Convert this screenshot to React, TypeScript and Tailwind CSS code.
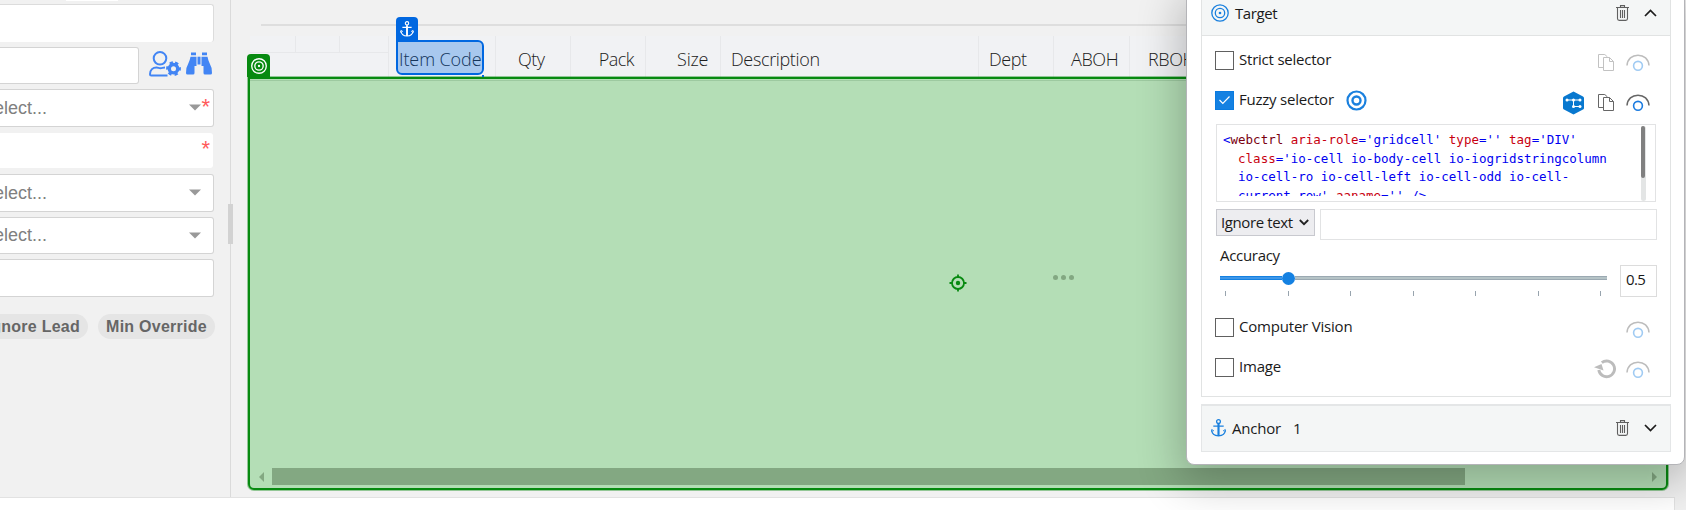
import React from 'react';

const ui = "font-['Open_Sans','Noto_Sans',sans-serif]";

function Field({ className, placeholder, required }: { className: string; placeholder?: boolean; required?: boolean }) {
  return (
    <div className={`relative flex shrink-0 items-center rounded-r-[3px] bg-white ${className}`}>
      {placeholder && (
        <>
          <span className="-ml-[18px] -mt-px text-[18px] leading-none text-[#808080]">Select...</span>
          <svg className="absolute right-[12px] top-[14px]" width="12" height="7" viewBox="0 0 12 7">
            <path d="M0 0.500H12L6 6.500Z" fill="#999" />
          </svg>
        </>
      )}
      {required && (
        <span className={`absolute right-[3px] text-[22px] leading-[22px] text-[#ff5a5a] ${placeholder ? 'top-[6px]' : 'top-[5px]'}`}>*</span>
      )}
    </div>
  );
}

function Pill({ className, children }: { className: string; children: string }) {
  return (
    <span className={`flex h-[25px] shrink-0 items-center rounded-full bg-[#e5e5e5] text-[16px] font-bold tracking-[0.25px] text-[#666] ${className}`}>
      {children}
    </span>
  );
}

function UserGear() {
  return (
    <svg width="32" height="26" viewBox="0 0 32 26" fill="none" stroke="#4285f4" strokeWidth="2">
      <circle cx="11" cy="7.300" r="6.300" />
      <path d="M18.500 24.500H2.200Q1 24.500 1 23.300C1 19 4 16.500 7.500 16.500C9.500 16.500 9.500 17.300 11.500 17.300C13.500 17.300 13.500 16.500 16 16.500" />
      <circle cx="24.500" cy="17.700" r="4.200" strokeWidth="3.400" />
      <circle cx="24.500" cy="17.700" r="6.200" strokeWidth="2.400" strokeDasharray="3.250 3.250" strokeDashoffset="-1.600" transform="rotate(-90 24.500 17.700)" />
    </svg>
  );
}

function Binoculars() {
  return (
    <svg width="26" height="23" viewBox="0 0 26 23" fill="#4285f4">
      <path d="M5 0.500H10V3.200H5zM16 0.500H21V3.200H16z" />
      <path d="M4.500 4.700H10.500V14H8.500V21Q8.500 22.500 7 22.500H1.500Q0 22.500 0 21Q0 15 2.500 11Q3.800 8.500 4.500 4.700z" />
      <path d="M21.500 4.700H15.500V14H17.500V21Q17.500 22.500 19 22.500H24.500Q26 22.500 26 21Q26 15 23.500 11Q22.200 8.500 21.500 4.700z" />
      <path d="M11.500 4.700H14.500V12.500H11.500z" />
    </svg>
  );
}

function Sidebar() {
  return (
    <aside className="relative flex h-[497px] w-[231px] shrink-0 flex-col border-r border-[#dadada] font-['Liberation_Sans',sans-serif]">
      <div className="ml-[66px] h-px w-[52px] shrink-0 bg-white" />
      <Field className="mt-[3px] h-[38px] w-[214px] border-r border-t border-[#dcdcdc]" />
      <div className="mt-[5px] flex h-[37px] shrink-0">
        <Field className="h-[37px] w-[139px] border-y border-r border-[#d4d4d4]" />
        <div className="flex pl-[10px] pt-[4px]">
          <UserGear />
          <span className="ml-[5px] mt-[1px]"><Binoculars /></span>
        </div>
      </div>
      <Field className="mt-[5px] h-[38px] w-[214px] border-y border-r border-[#d4d4d4]" placeholder required />
      <Field className="mt-[6px] h-[35px] w-[213px] rounded-none" required />
      <Field className="mt-[6px] h-[38px] w-[214px] border-y border-r border-[#d4d4d4]" placeholder />
      <Field className="mt-[5px] h-[37px] w-[214px] border-y border-r border-[#d4d4d4]" placeholder />
      <Field className="mt-[5px] h-[38px] w-[214px] border-y border-r border-[#d4d4d4]" />
      <div className="mt-[17px] flex w-[215px] justify-between">
        <Pill className="-ml-[30px] w-[118px] justify-end pr-[8px]">Ignore Lead</Pill>
        <Pill className="w-[117px] justify-center">Min Override</Pill>
      </div>
      <div className="absolute -right-[3px] top-[204px] h-[40px] w-[5px] bg-[#d2d2d2]" />
    </aside>
  );
}

function Target({ size, color, width }: { size: number; color: string; width: number }) {
  return (
    <svg width={size} height={size} viewBox="0 0 18 18" fill="none" stroke={color} strokeWidth={width}>
      <circle cx="9" cy="9" r="8.200" />
      <circle cx="9" cy="9" r="4.700" />
      <circle cx="9" cy="9" r="1.300" fill={color} stroke="none" />
    </svg>
  );
}

function Anchor({ color, width, height }: { color: string; width: number; height: number }) {
  return (
    <svg width={width} height={height} viewBox="0 0 15 18" fill="none" stroke={color} strokeWidth="1.300">
      <circle cx="7.500" cy="2.600" r="1.900" />
      <path d="M7.500 4.500V17M2.300 7.200H12.700M0.800 11.500C1 15 4 16.700 7.500 16.900C11 16.700 14 15 14.200 11.500" />
      <path d="M7.500 5V16.500" strokeWidth="2" />
      <path d="M0 13L0.700 10.500L3 12M15 13L14.300 10.500L12 12" strokeWidth="0.900" />
    </svg>
  );
}

const cell = 'flex h-full shrink-0 items-center border-r border-[#e7e8ea] pt-[3px]';

function Grid() {
  return (
    <main className="relative flex h-[497px] w-[1455px] flex-col">
      <div className="ml-[30px] mt-[24px] h-[2px] w-[1390px] shrink-0 bg-[#dedede]" />
      <div className={`ml-[19px] mt-[10px] flex h-[44px] w-[1418px] shrink-0 bg-[#f1f2f4] text-[18px] font-light text-[#202020] ${ui}`}>
        <div className="h-full w-[139px] border-r border-[#e7e8ea]">
          <div className="flex h-[17px] border-b border-[#e7e8ea]">
            <span className="w-[46px] border-r border-[#e7e8ea]" />
            <span className="w-[44px] border-r border-[#e7e8ea]" />
          </div>
        </div>
        <div className={`${cell} w-[107px] pl-[10px] tracking-[-0.1px]`}>Item Code</div>
        <div className={`${cell} w-[75px] pl-[22px] tracking-[-0.5px]`}>Qty</div>
        <div className={`${cell} w-[75px] justify-end pr-[11px] tracking-[-0.5px]`}>Pack</div>
        <div className={`${cell} w-[75px] justify-end pr-[12px] tracking-[-0.3px]`}>Size</div>
        <div className={`${cell} w-[258px] pl-[10px] tracking-[-0.35px]`}>Description</div>
        <div className={`${cell} w-[75px] pl-[10px] tracking-[-0.4px]`}>Dept</div>
        <div className={`${cell} w-[76px] pl-[17px] tracking-[-0.4px]`}>ABOH</div>
        <div className={`${cell} w-[76px] pl-[18px] tracking-[-0.4px]`}>RBOH</div>
      </div>

      <div className="absolute left-[17px] top-[77px] h-[413px] w-[1420px] rounded-[6px] rounded-tl-none border-2 border-[#078a10] bg-[#b4deb6] shadow-[0_0_0_1px_#078a1066]">
        <div className="h-px translate-y-px bg-[#9dc9a0]" />
        <svg className="absolute left-[699px] top-[195px]" width="18" height="18" viewBox="0 0 18 18" fill="none" stroke="#078a10" strokeWidth="1.800">
          <circle cx="9" cy="9" r="6" />
          <path d="M9 0.500V3M9 15V17.500M0.500 9H3M15 9H17.500" />
          <circle cx="9" cy="9" r="2.200" fill="#078a10" stroke="none" />
        </svg>
        <div className="absolute left-[803px] top-[196px] flex gap-[3px]">
          <i className="size-[5px] rounded-full bg-[#83a882]" />
          <i className="size-[5px] rounded-full bg-[#83a882]" />
          <i className="size-[5px] rounded-full bg-[#83a882]" />
        </div>
        <div className="absolute bottom-[3px] left-[9px] flex h-[17px] w-[1398px] items-center">
          <svg width="5" height="10" viewBox="0 0 5 10"><path d="M5 0V10L0 5Z" fill="#83a882" /></svg>
          <div className="ml-[8px] h-full w-[1193px] bg-[#83a882]" />
          <svg className="ml-auto" width="5" height="10" viewBox="0 0 5 10"><path d="M0 0V10L5 5Z" fill="#83a882" /></svg>
        </div>
      </div>
      <div className="absolute left-[16px] top-[54px] flex h-[23px] w-[23px] items-center justify-center rounded-t-[4px] bg-[#078a10]">
        <Target size={16} color="#fff" width={1.5} />
      </div>
      <div className="absolute left-[165px] top-[40px] h-[35px] w-[88px] rounded-[6px] rounded-tl-none border-2 border-[#0067e0] bg-[#0067e04d]" />
      <div className="absolute left-[251px] top-[75px] h-[2px] w-[2px] bg-[#0067e0]" />
      <div className="absolute left-[165px] top-[17px] flex h-[23px] w-[22px] items-center justify-center rounded-t-[4px] bg-[#0067e0]">
        <Anchor color="#fff" width={14} height={16} />
      </div>
    </main>
  );
}

function Check({ on }: { on?: boolean }) {
  return on ? (
    <span className="flex size-[19px] items-center justify-center border border-[#0a7be0] bg-[#1481e2]">
      <svg width="13" height="10" viewBox="0 0 13 10" fill="none" stroke="#fff" strokeWidth="1.200"><path d="M1.500 5L4.800 8.300L11.500 1.500" /></svg>
    </span>
  ) : (
    <span className="size-[19px] border border-[#606060] bg-white" />
  );
}

function Eye({ on }: { on?: boolean }) {
  return (
    <svg width="24" height="18" viewBox="0 0 24 18" fill="none">
      <path d="M1 11.500C1.500 5 6 1.200 12 1.200S22.500 5 23 11.500" stroke={on ? '#666' : '#bdbdbd'} strokeWidth="1.500" />
      <circle cx="12" cy="11.800" r="4.400" stroke={on ? '#1a7be0' : '#a0cbf3'} strokeWidth="1.600" />
    </svg>
  );
}

function Copy({ on }: { on?: boolean }) {
  return (
    <svg width="16" height="17" viewBox="0 0 16 17" fill="none" stroke={on ? '#666' : '#c2c2c2'} strokeWidth="1">
      <path d="M5 13.500H0.500V0.500H6.800L9.500 3" />
      <path d="M5.500 3.500H11.500L15.500 7.500V16.500H5.500ZM11.500 3.500V7.500H15.500" />
    </svg>
  );
}

function Hexagon() {
  return (
    <svg width="21" height="24" viewBox="0 0 21 24">
      <path d="M10.500 0.500L20 5.500Q21 6 21 7V17Q21 18 20 18.500L10.500 23.500L1 18.500Q0 18 0 17V7Q0 6 1 5.500Z" fill="#0878cf" />
      <path d="M4 9H17M10.500 9V15.500H17" stroke="#fff" fill="none" strokeWidth="1" />
      <g fill="#fff"><circle cx="4" cy="9" r="1.500" /><circle cx="10.500" cy="9" r="1.500" /><circle cx="17" cy="9" r="1.500" /><circle cx="10.500" cy="15.500" r="1.500" /><circle cx="17" cy="15.500" r="1.500" /></g>
    </svg>
  );
}

function Reset() {
  return (
    <svg width="22" height="20" viewBox="0 0 22 20" fill="none">
      <path d="M7.800 3.600A7.900 7.900 0 1 1 4.800 11" stroke="#bcbcbc" strokeWidth="2.900" />
      <path d="M0 8.200L7.500 5L9.500 11.500Z" fill="#bcbcbc" />
    </svg>
  );
}

function Trash() {
  return (
    <svg width="13" height="16" viewBox="0 0 13 16" fill="none" stroke="#606060" strokeWidth="1.100">
      <path d="M0 2.500H13M4.500 2.500V0.600H8.500V2.500M1.500 2.500V13.500Q1.500 15.400 3.200 15.400H9.800Q11.500 15.400 11.500 13.500V2.500M4.500 5V13M6.500 5V13M8.500 5V13" />
    </svg>
  );
}

function Chevron({ up }: { up?: boolean }) {
  return (
    <svg width="13" height="8" viewBox="0 0 13 8" fill="none" stroke="#1c1c1c" strokeWidth="1.700">
      <path d={up ? 'M1 7L6.500 1.500L12 7' : 'M1 1L6.500 6.500L12 1'} />
    </svg>
  );
}

function Row({ label, on, className, tracking, extra, children }: { label: string; on?: boolean; className: string; tracking: string; extra?: React.ReactNode; children: React.ReactNode }) {
  return (
    <div className={`flex h-[24px] shrink-0 items-center pl-[13px] pr-[20px] ${className}`}>
      <Check on={on} />
      <span className={`-mt-px ml-[5px] ${tracking}`}>{label}</span>
      {extra}
      <div className="ml-auto flex items-center">{children}</div>
    </div>
  );
}

function Attr({ name, children }: { name: string; children: string }) {
  return <><span className="text-[#c80010]">{name}</span>='{children}'</>;
}

function Panel() {
  return (
    <section className={`absolute left-[1186px] top-[-10px] flex h-[475px] w-[499px] flex-col rounded-[8px] border border-[#b4b4b8] bg-white pl-[14px] pr-[14px] text-[15px] font-[450] text-[#1a1a1a] shadow-[0_12px_44px_6px_rgba(0,0,0,0.24)] ${ui}`}>
      <div className="flex h-[406px] w-[470px] shrink-0 flex-col border border-t-0 border-[#e1e3e3]">
        <div className="flex h-[45px] shrink-0 items-center border-b border-[#e1e3e3] bg-[#f4f6f6] pl-[9px] pr-[13px]">
          <Target size={18} color="#1a80de" width={1.3} />
          <span className="ml-[6px] mt-px tracking-[-0.4px]">Target</span>
          <span className="ml-auto mr-[15px]"><Trash /></span>
          <Chevron up />
        </div>
        <Row label="Strict selector" className="mt-[12px]" tracking="tracking-[-0.22px]">
          <span className="mr-[12px] mt-[5px]"><Copy /></span>
          <span className="mt-[5px]"><Eye /></span>
        </Row>
        <Row
          label="Fuzzy selector"
          on
          className="mt-[16px]"
          tracking="tracking-[-0.22px]"
          extra={
            <svg className="ml-[12px]" width="21" height="21" viewBox="0 0 21 21" fill="none" stroke="#1a80de">
              <circle cx="10.500" cy="10.500" r="9" strokeWidth="2.200" />
              <circle cx="10.500" cy="10.500" r="4" strokeWidth="2.400" />
            </svg>
          }
        >
          <span className="mr-[14px] mt-[5px]"><Hexagon /></span>
          <span className="mr-[12px] mt-[5px]"><Copy on /></span>
          <span className="mt-[5px]"><Eye on /></span>
        </Row>
        <div className="ml-[14px] mt-[12px] flex h-[78px] w-[440px] shrink-0 border border-[#e2e3e4] pl-[6px] pt-[6px]">
          <div className="h-[65px] w-[418px] overflow-hidden whitespace-pre font-['DejaVu_Sans_Mono',monospace] text-[12.5px] font-normal leading-[18.6px] text-[#0000f0]">
            <div>&lt;<span className="text-[#7a0010]">webctrl</span> <Attr name="aria-role">gridcell</Attr> <Attr name="type">{''}</Attr> <Attr name="tag">DIV</Attr></div>
            <div>{'  '}<span className="text-[#c80010]">class</span>='io-cell io-body-cell io-iogridstringcolumn</div>
            <div>{'  '}io-cell-ro io-cell-left io-cell-odd io-cell-</div>
            <div>{'  '}current-row' <Attr name="aaname">{''}</Attr> /&gt;</div>
          </div>
          <div className="-mt-[5px] h-[75px] w-[5px] rounded-full bg-[#e3e5e5]">
            <div className="h-[52px] w-[4px] rounded-full bg-[#808080]" />
          </div>
        </div>
        <div className="ml-[14px] mt-[7px] flex h-[31px] shrink-0 gap-[5px]">
          <div className="flex h-[27px] w-[99px] items-center border border-[#c8c9cf] bg-[#ededf0] pl-[4px]">
            <span className="tracking-[-0.4px]">Ignore text</span>
            <svg className="ml-[6px]" width="10" height="7" viewBox="0 0 10 7" fill="none" stroke="#222" strokeWidth="1.800"><path d="M0.800 1L5 5.200L9.200 1" /></svg>
          </div>
          <div className="h-[31px] w-[337px] border border-[#e2e3e4]" />
        </div>
        <div className="ml-[18px] mt-[5px] h-[20px] shrink-0 leading-[20px] tracking-[-0.3px]">Accuracy</div>
        <div className="ml-[18px] flex h-[32px] shrink-0">
          <div className="flex w-[387px] flex-col pt-[11px]">
            <div className="flex h-[4px] items-center">
              <div className="h-[4px] w-[62px] border-y border-[#1481e2] bg-[#3f97e8]" />
              <div className="size-[13px] shrink-0 rounded-full bg-[#1481e2]" />
              <div className="h-[4px] flex-1 border-y border-[#9ba9b2] bg-[#b5c3c6]" />
            </div>
            <div className="ml-[5px] mt-[11px] flex w-[376px] justify-between">
              {[0, 1, 2, 3, 4, 5, 6].map((t) => <i key={t} className="h-[5px] w-px bg-[#98a4ae]" />)}
            </div>
          </div>
          <div className="ml-[13px] flex h-[32px] w-[37px] items-center border border-[#dcdcdc] pb-[3px] pl-[5px] tracking-[-0.6px]">0.5</div>
        </div>
        <Row label="Computer Vision" className="mt-[18px]" tracking="tracking-[-0.2px]">
          <span className="mt-[5px]"><Eye /></span>
        </Row>
        <Row label="Image" className="mt-[16px]" tracking="tracking-[-0.2px]">
          <span className="mr-[10px] mt-[4px]"><Reset /></span>
          <span className="mt-[5px]"><Eye /></span>
        </Row>
      </div>
      <div className="mt-[7px] flex h-[48px] w-[470px] shrink-0 items-center border border-t-2 border-[#e4e6e7] bg-[#f4f6f6] pb-[2px] pl-[9px] pr-[13px]">
        <Anchor color="#1a80de" width={15} height={18} />
        <span className="ml-[6px] mt-px tracking-[-0.2px]">Anchor</span>
        <span className="ml-[12px] mt-px">1</span>
        <span className="ml-auto mr-[15px]"><Trash /></span>
        <Chevron />
      </div>
    </section>
  );
}

export default function App() {
  return (
    <div className="relative h-[510px] w-[1686px] overflow-hidden bg-[#f1f1f1]">
      <div className="flex">
        <Sidebar />
        <Grid />
      </div>
      <div className="h-[13px] w-[1675px] border-r border-t border-[#e2e2e2] bg-white" />
      <Panel />
    </div>
  );
}
